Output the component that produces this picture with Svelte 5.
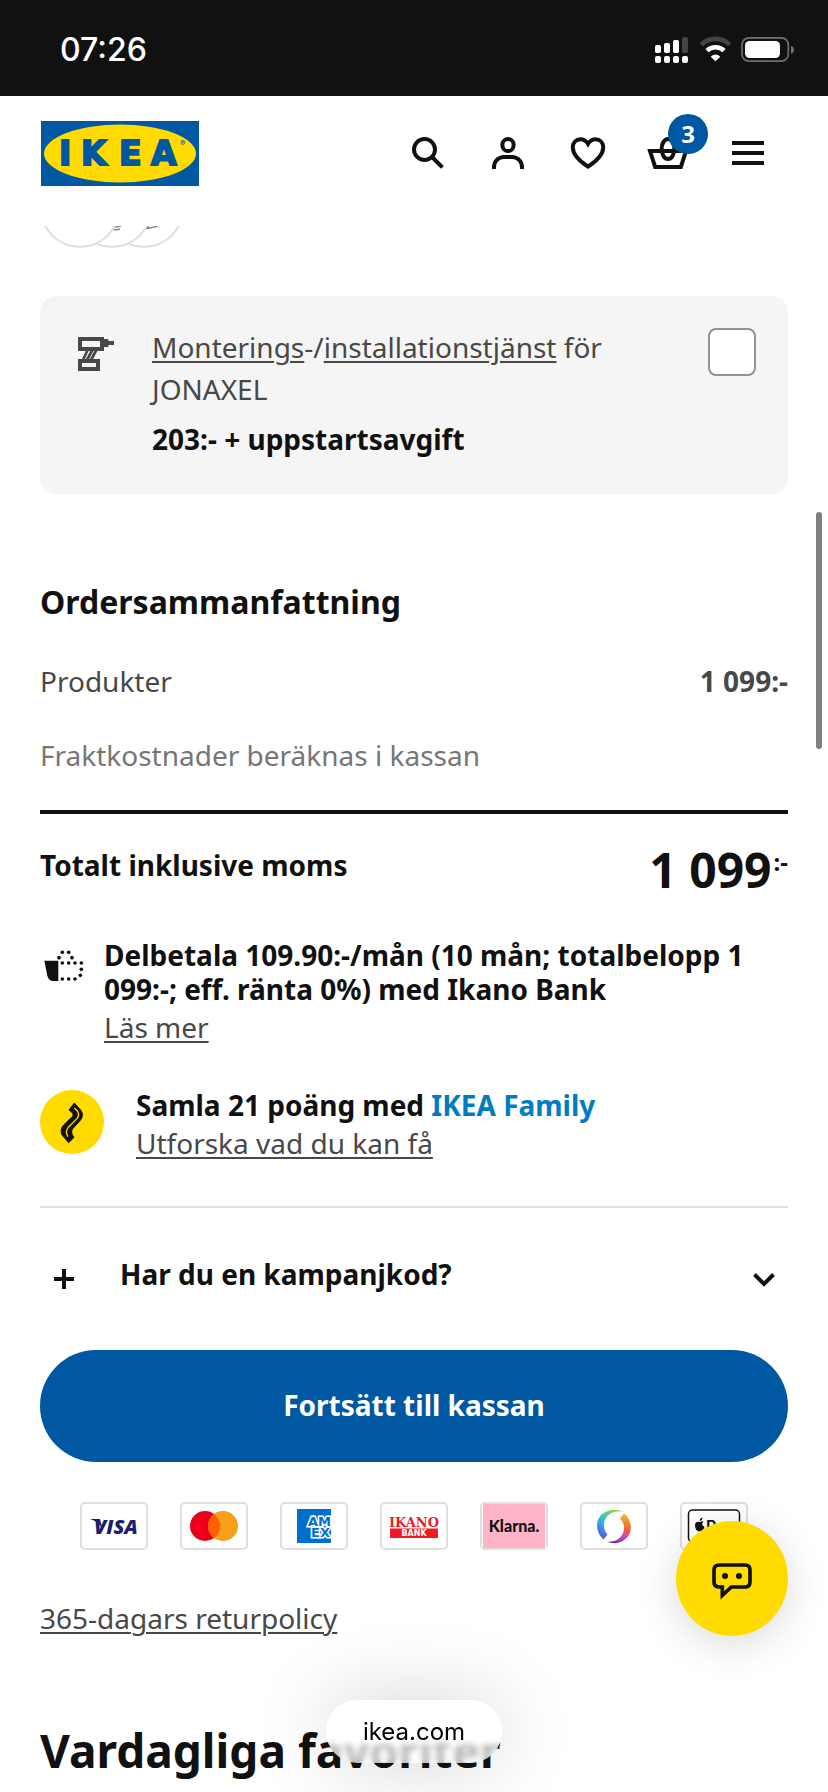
<script>
  let assembly = $state(false);
  let promoOpen = $state(false);
  const cartCount = 3;

  const cupDots = [
    [127, 97], [146, 97], [117, 113], [156, 113], [127, 129], [146, 129], [165, 129],
    [184, 129], [184, 148], [181, 166], [165, 177], [146, 177], [127, 177]
  ];
  const bars = [
    { x: 765, y: 135, on: true },
    { x: 792, y: 129, on: true },
    { x: 819, y: 120, on: true },
    { x: 846, y: 111, on: false }
  ];
</script>

<div class="page">
  <div class="status">
    <span class="time">07:26</span>
    <svg width="145" height="33" viewBox="756 99 435 99" aria-hidden="true">
      {#each bars as b}
        <rect x={b.x} y={b.y} width="18" height={159 - b.y} rx="5" fill={b.on ? '#fff' : '#444'} />
        <rect x={b.x} y="168" width="18" height="21" rx="6" fill="#fff" />
      {/each}
      <path d="M904 134a61 61 0 0 1 85 0" fill="none" stroke="#444" stroke-width="14" />
      <path d="M921 152a37 37 0 0 1 51 0" fill="none" stroke="#fff" stroke-width="14" />
      <path d="M932 170q14.500-13 29 0l-14.500 14z" fill="#fff" />
      <rect x="1026" y="113.500" width="139" height="70" rx="21" fill="none" stroke="#707070" stroke-width="5" />
      <rect x="1035" y="123" width="105" height="51" rx="14" fill="#fff" />
      <path d="M1173 137q9 3 9 12t-9 12z" fill="#707070" />
    </svg>
  </div>

  <header>
    <a class="logo" href="#home" aria-label="IKEA">
      <svg width="158" height="65" viewBox="0 0 158 65">
        <rect width="158" height="65" fill="#0058a3" />
        <ellipse cx="79" cy="32.500" rx="76" ry="29" fill="#ffdb00" />
        <text x="18 40 78 110" y="44" class="wordmark">IKEA</text>
        <text x="139" y="25" class="reg">®</text>
      </svg>
    </a>
    <nav>
      <button aria-label="Sök">
        <svg viewBox="0 0 24 24"><circle cx="10.250" cy="10.250" r="5.250" /><path d="M14 14l5.200 5.200" /></svg>
      </button>
      <button aria-label="Profil">
        <svg viewBox="0 0 24 24"><rect x="9.200" y="5" width="5.600" height="6" rx="2.800" /><path d="M5 20v-1a5 5 0 0 1 5-5h4a5 5 0 0 1 5 5v1" /></svg>
      </button>
      <button aria-label="Favoriter">
        <svg viewBox="0 0 24 24"><path d="M12 18.800C9 16.800 4.400 13 4.400 9.200 4.400 6.800 6 5.100 8.200 5.100c1.700 0 2.900.8 3.800 2.300.9-1.500 2.100-2.300 3.800-2.300 2.200 0 3.800 1.700 3.800 4.100 0 3.800-4.600 7.600-7.600 9.600z" /></svg>
      </button>
      <button aria-label="Varukorg">
        <svg viewBox="0 0 24 24"><path d="M3 11h18l-2.600 8H5.600z" /><ellipse cx="12" cy="10" rx="3.200" ry="5" /></svg>
        <span class="badge">{cartCount}</span>
      </button>
      <button aria-label="Meny">
        <svg viewBox="0 0 24 24"><path d="M4 7h16M4 12h16M4 17h16" /></svg>
      </button>
    </nav>
  </header>

  <main>
    <div class="thumbs" aria-hidden="true">
      <span></span>
      <span><svg width="76" height="21" viewBox="0 0 76 21"><path d="M34 1l8 1 5-1M35 3l7 2 4-1" /></svg></span>
      <span><svg width="76" height="21" viewBox="0 0 76 21"><path d="M33 4q10 0 19-3M34 2l9 0" /></svg></span>
    </div>

    <section class="service">
      <svg class="icon" viewBox="156 150 144 144" aria-hidden="true">
        <g fill="none" stroke="#484848" stroke-width="12">
          <path d="M180 177h66v30h-66zM180 243h54v24h-54z" />
          <path d="M203 210l-14 30M217 210l-16 30M229 210l-16 30" stroke-width="8" />
        </g>
        <path d="M250 177h15v6h17v12h-17v6h-15z" fill="#484848" />
      </svg>
      <div class="grow">
        <label for="assembly"><a href="#montering">Monterings</a>-/<a href="#installation">installationstjänst</a> för JONAXEL</label>
        <p class="strong">203:- + uppstartsavgift</p>
      </div>
      <input id="assembly" type="checkbox" bind:checked={assembly} />
    </section>

    <h2>Ordersammanfattning</h2>
    <div class="row products"><span>Produkter</span><b>1 099:-</b></div>
    <p class="shipping">Fraktkostnader beräknas i kassan</p>
    <div class="row total">
      <span class="strong">Totalt inklusive moms</span>
      <span class="price">1 099<span class="unit">:-</span></span>
    </div>

    <section class="installment">
      <svg class="icon" viewBox="60 78 144 144" aria-hidden="true">
        <path d="M73 122h42v61h-15q-14 0-18-16z" fill="#111" />
        {#each cupDots as [x, y]}<circle cx={x} cy={y} r="5.500" fill="#111" />{/each}
      </svg>
      <div class="grow tight">
        <p class="strong">Delbetala 109.90:-/mån (10 mån; totalbelopp 1 099:-; eff. ränta 0%) med Ikano Bank</p>
        <a href="#delbetala">Läs mer</a>
      </div>
    </section>

    <section class="family">
      <svg viewBox="60 510 192 192" aria-hidden="true">
        <circle cx="156" cy="606" r="96" fill="#ffdb00" />
        <path d="M147 570L163 549L182 570Q193 586 181 601L158 626Q150 636 162 652L146 668L127 646Q118 630 131 615L157 590Q165 582 147 570Z" fill="#111" stroke="#111" stroke-width="3" />
        <path d="M163 564L172 573Q180 585 171 596L145 622Q134 634 144 650" fill="none" stroke="#ffdb00" stroke-width="4" />
      </svg>
      <div class="grow tight">
        <p class="strong">Samla 21 poäng med <span class="brand">IKEA Family</span></p>
        <a href="#family">Utforska vad du kan få</a>
      </div>
    </section>

    <button class="promo" aria-expanded={promoOpen} onclick={() => (promoOpen = !promoOpen)}>
      <svg viewBox="0 0 48 52" aria-hidden="true"><path d="M14 26h20M24 16v20" /></svg>
      <span>Har du en kampanjkod?</span>
      <svg viewBox="0 0 48 52" aria-hidden="true"><path d="M14.500 21.500l9.500 9.500 9.500-9.500" /></svg>
    </button>

    <button class="checkout">Fortsätt till kassan</button>

    <ul class="payments">
      <li>
        <svg viewBox="0 0 64 44" role="img" aria-label="Visa">
          <path d="M8 15h10l3 12q-3-9-13-12z" fill="#1a1f71" />
          <text x="12" y="30" class="visa">VISA</text>
        </svg>
      </li>
      <li>
        <svg viewBox="0 0 64 44" role="img" aria-label="Mastercard">
          <circle cx="23" cy="22" r="15" fill="#eb001b" />
          <circle cx="41" cy="22" r="15" fill="#f79e1b" />
          <path d="M32 10a15 15 0 0 1 0 24a15 15 0 0 1 0-24z" fill="#ff5f00" />
        </svg>
      </li>
      <li>
        <svg viewBox="0 0 64 44" role="img" aria-label="American Express">
          <svg x="15" y="5" width="34" height="34" viewBox="0 0 34 34">
            <rect width="34" height="34" fill="#006fcf" />
            <text x="11" y="17" class="amex">AM</text>
            <text x="14" y="28" class="amex">EX</text>
          </svg>
        </svg>
      </li>
      <li>
        <svg viewBox="0 0 64 44" role="img" aria-label="Ikano Bank">
          <text x="32" y="23" class="ikano">IKANO</text>
          <rect x="8" y="24.500" width="48" height="9.500" fill="#ed1c24" />
          <text x="32" y="32" class="bank">BANK</text>
        </svg>
      </li>
      <li>
        <svg viewBox="0 0 64 44" role="img" aria-label="Klarna">
          <rect x="1" width="62" height="44" fill="#ffb3c7" />
          <text x="32" y="28" class="klarna">Klarna.</text>
        </svg>
      </li>
      <li>
        <svg viewBox="0 0 64 44" role="img" aria-label="Swish">
          <defs>
            <linearGradient id="sw-l" x1="0" y1="1" x2="0.600" y2="0">
              <stop offset="0" stop-color="#5a3be0" />
              <stop offset="0.350" stop-color="#3d8cf0" />
              <stop offset="0.650" stop-color="#3cc9c4" />
              <stop offset="1" stop-color="#8fd33c" />
            </linearGradient>
            <linearGradient id="sw-r" x1="0.500" y1="0" x2="0.300" y2="1">
              <stop offset="0" stop-color="#f6b52a" />
              <stop offset="0.450" stop-color="#f0603a" />
              <stop offset="0.750" stop-color="#c846c0" />
              <stop offset="1" stop-color="#6a2a9a" />
            </linearGradient>
          </defs>
          <path d="M21.500 35.500C13 28 13 15 21 9.500C27 5 35 4.500 41 8C33 6.500 27 9 24 14C20.500 20 21.500 26 25.500 30.500Z" fill="url(#sw-l)" />
          <path d="M42 9.500C51 16 51 30 43 35.500C37 40 30 40 25 37.500C31 38.500 37 36 40 31C43.500 25 42.500 19 38 14.500Z" fill="url(#sw-r)" />
        </svg>
      </li>
      <li>
        <svg viewBox="0 0 64 44" role="img" aria-label="Apple Pay">
          <rect x="6.500" y="6" width="51" height="32" rx="4" fill="#fff" stroke="#111" stroke-width="1.500" />
          <path d="M21.500 17.500q-3 3 1 5.500q-1 3-3 4.500q-1.500-.8-3 0Q13 26 13 21q.5-4 5-3q1.500-1 3.500-.5zM17.700 17q0-3 2.800-3.500q0 3-2.800 3.500z" fill="#111" />
          <text x="24" y="28" class="pay">Pay</text>
        </svg>
      </li>
    </ul>

    <a class="returns" href="#retur">365-dagars returpolicy</a>
    <h1>Vardagliga favoriter</h1>
  </main>

  <div class="scrollbar"></div>
  <button class="chat" aria-label="Chatta med oss">
    <svg viewBox="1044 228 144 144">
      <path d="M1078 258H1155Q1170 258 1170 273V309Q1170 324 1155 324H1114L1087 349V324H1078Q1062 324 1062 309V273Q1062 258 1078 258z" fill="none" stroke="#111" stroke-width="11" />
      <circle cx="1095" cy="291" r="9" fill="#111" /><circle cx="1137" cy="291" r="9" fill="#111" />
    </svg>
  </button>
  <button class="address">ikea.com</button>
</div>

<style>
  :global(body) { background: #fff; }
  * { box-sizing: border-box; }
  .page {
    position: relative;
    font: 28px/42px 'Noto Sans', sans-serif;
    color: #484848;
  }
  p, h1, h2, ul { margin: 0; padding: 0; }
  a { color: inherit; text-underline-offset: 3px; text-decoration-thickness: 2px; }
  button { border: 0; padding: 0; background: none; font: inherit; color: #111; cursor: pointer; }
  .status {
    display: flex;
    align-items: center;
    justify-content: space-between;
    height: 96px;
    padding: 3px 31px 0 60px;
    background: #111;
    color: #fff;
  }
  .time { font: 500 32px/40px Inter, sans-serif; }
  header {
    display: flex;
    align-items: center;
    justify-content: space-between;
    height: 130px;
    padding: 0 40px 16px 41px;
  }
  .logo svg { display: block; }
  .wordmark {
    font: bold 33px 'DejaVu Sans', sans-serif;
    fill: #0058a3;
    stroke: #0058a3;
    stroke-width: 2px;
  }
  .reg { font: bold 8px Inter, sans-serif; fill: #0058a3; }
  nav { display: flex; }
  nav button { position: relative; display: grid; place-items: center; width: 80px; height: 80px; }
  nav svg { width: 48px; height: 48px; fill: none; stroke: #111; stroke-width: 2; }
  .badge {
    position: absolute;
    left: 40px;
    top: 1px;
    width: 40px;
    border-radius: 50%;
    background: #0058a3;
    color: #fff;
    font-size: 24px;
    font-weight: 700;
    line-height: 40px;
  }
  main { padding: 0 40px 4px; }
  .thumbs { display: flex; align-items: flex-end; height: 22px; overflow: hidden; }
  .thumbs span {
    position: relative;
    flex: none;
    display: flex;
    align-items: flex-end;
    width: 80px;
    height: 80px;
    border: 2px solid #dfdfdf;
    border-radius: 50%;
    background: #fff;
    overflow: hidden;
  }
  .thumbs span + span { margin-left: -48px; }
  .thumbs span:nth-child(1) { z-index: 2; }
  .thumbs span:nth-child(2) { z-index: 1; }
  .thumbs path { fill: none; stroke: #7c8794; stroke-width: 1.500; }
  .service {
    display: flex;
    align-items: flex-start;
    gap: 32px;
    margin-top: 48px;
    padding: 30px 32px 34px;
    border-radius: 16px;
    background: #f5f5f5;
  }
  .icon { flex: none; width: 48px; height: 48px; }
  .service .icon { margin-top: 4px; }
  .grow { flex: 1; min-width: 0; }
  .service label { display: block; margin-bottom: 8px; }
  .service input {
    appearance: none;
    width: 48px;
    height: 48px;
    margin: 2px 0 0;
    border: 2px solid #929292;
    border-radius: 8px;
    background: #fff;
  }
  .service input:checked { background: #111; }
  .strong { font-weight: 700; color: #111; }
  h2 { margin: 84px 0 34px; font-size: 32px; line-height: 48px; color: #111; }
  .row { display: flex; justify-content: space-between; align-items: flex-start; }
  .shipping { margin: 32px 0 34px; color: #767676; }
  .total { padding-top: 28px; border-top: 4px solid #111; }
  .total .strong { padding-top: 2px; }
  .price { display: flex; gap: 2px; font-size: 48px; line-height: 56px; font-weight: 700; color: #111; }
  .unit { font-size: 24px; line-height: 40px; }
  .tight { display: flex; flex-direction: column; align-items: flex-start; gap: 4px; line-height: 34px; }
  .installment { display: flex; gap: 16px; margin-top: 40px; }
  .installment .icon { margin-top: 8px; }
  .family {
    display: flex;
    gap: 32px;
    margin-top: 44px;
    padding-bottom: 46px;
    border-bottom: 2px solid #dfdfdf;
  }
  .family svg { flex: none; width: 64px; height: 64px; margin-top: 2px; }
  .brand { color: #007cc1; }
  .promo {
    display: flex;
    align-items: flex-start;
    gap: 32px;
    width: 100%;
    padding: 45px 0;
    font-weight: 700;
    text-align: left;
  }
  .promo svg { flex: none; width: 48px; height: 52px; fill: none; stroke: #111; stroke-width: 4; }
  .promo span { flex: 1; }
  .checkout {
    display: block;
    width: 100%;
    height: 112px;
    padding-bottom: 2px;
    border-radius: 56px;
    background: #0058a3;
    color: #fff;
    font-weight: 700;
  }
  .payments { display: flex; justify-content: center; gap: 32px; margin: 40px 0 47px; list-style: none; }
  .payments li { width: 68px; height: 48px; border: 2px solid #dfdfdf; border-radius: 5px; overflow: hidden; }
  .payments li > svg { display: block; width: 64px; height: 44px; }
  .visa { font: italic 800 20px 'Open Sans', sans-serif; fill: #1a1f71; }
  .amex { font: bold 13px 'DejaVu Sans', sans-serif; fill: #006fcf; stroke: #fff; stroke-width: 3px; paint-order: stroke; }
  .ikano { font: bold 13px 'DejaVu Serif', serif; fill: #ed1c24; text-anchor: middle; }
  .bank { font: bold 8px 'DejaVu Sans', sans-serif; fill: #fff; text-anchor: middle; }
  .klarna { font: 900 16px Lato, sans-serif; fill: #111; text-anchor: middle; }
  .pay { font: 600 16px Inter, sans-serif; fill: #111; }
  .returns { display: block; width: fit-content; }
  h1 { margin-top: 75px; font-size: 46px; line-height: 72px; color: #111; }
  .scrollbar { position: absolute; right: 6px; top: 512px; width: 6px; height: 237px; border-radius: 3px; background: #7f7f7f; }
  .chat {
    position: fixed;
    right: 40px;
    bottom: 156px;
    display: grid;
    place-items: center;
    width: 112px;
    height: 115px;
    border-radius: 50%;
    background: #ffdb00;
    box-shadow: 0 8px 40px rgba(0, 0, 0, 0.150);
  }
  .chat svg { width: 48px; height: 48px; }
  .address {
    position: fixed;
    left: 50%;
    bottom: 29px;
    translate: -50% 0;
    width: 176px;
    height: 63px;
    border-radius: 32px;
    background: linear-gradient(#fff 58%, rgba(255, 255, 255, 0.700) 76%);
    backdrop-filter: blur(3px);
    box-shadow: 0 0 80px rgba(0, 0, 0, 0.180);
    font: 400 24px/63px Inter, sans-serif;
    color: #000;
  }
</style>
